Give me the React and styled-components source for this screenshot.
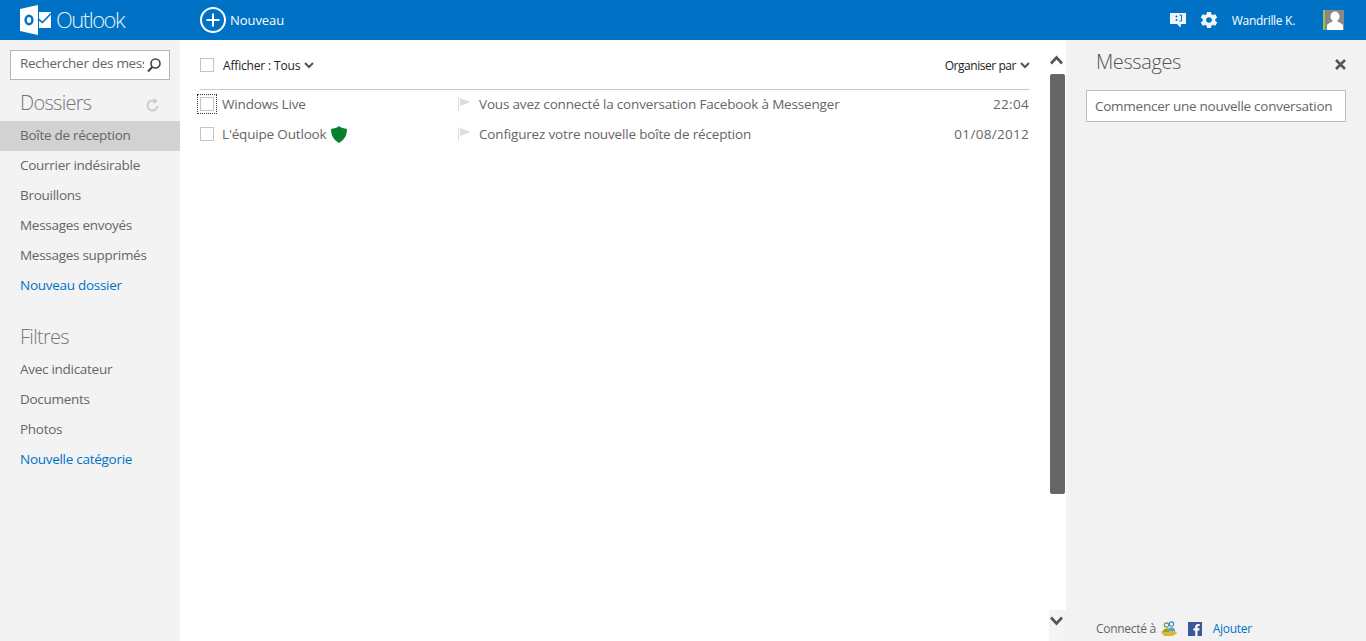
import styled, { createGlobalStyle } from 'styled-components';
import { IoMdSettings } from 'react-icons/io';

const Global = createGlobalStyle`
  html, body { margin: 0; padding: 0; height: 100%; overflow: hidden; }
  body { font-family: "Open Sans", "Noto Sans", sans-serif; color: #666; background: #fff; }
  * { box-sizing: border-box; }
`;

const Page = styled.div`
  width: 1366px;
  height: 641px;
  display: flex;
  flex-direction: column;
  overflow: hidden;
`;

const Header = styled.header`
  height: 40px;
  flex: none;
  background: #0072c6;
  color: #fff;
  display: flex;
  align-items: center;
  padding-left: 20px;
`;

const Brand = styled.div`
  width: 180px;
  display: flex;
  align-items: center;
  gap: 5px;
`;

const BrandName = styled.span`
  font-size: 22px;
  font-weight: 300;
  letter-spacing: -1.5px;
  padding-bottom: 3px;
  color: #e4f1fa;
`;

const NewButton = styled.div`
  display: flex;
  align-items: center;
  gap: 4px;
  font-size: 13px;
  letter-spacing: -0.05px;
`;

const HeaderRight = styled.div`
  margin-left: auto;
  display: flex;
  align-items: center;
  padding-right: 22px;
`;

const Gear = styled(IoMdSettings)`
  margin-left: 13px;
  color: #eef5fb;
`;

const UserName = styled.span`
  font-size: 12px;
  letter-spacing: -0.3px;
  margin: 0 28px 0 13px;
`;

const Body = styled.div`
  flex: 1;
  display: flex;
  min-height: 0;
`;

const Sidebar = styled.aside`
  width: 180px;
  flex: none;
  background: #f3f3f3;
  padding-top: 10px;
`;

const SearchBox = styled.div`
  margin: 0 10px;
  height: 30px;
  border: 1px solid #b5b5b5;
  background: #fff;
  display: flex;
  align-items: center;
  padding: 0 7px 0 9px;
  font-size: 13.5px;
  letter-spacing: -0.3px;
  color: #666;
`;

const SearchText = styled.span`
  width: 124px;
  overflow: hidden;
  white-space: nowrap;
  margin-right: auto;
  padding-bottom: 4px;
`;

const SectionTitle = styled.div`
  display: flex;
  align-items: center;
  justify-content: space-between;
  height: 32px;
  padding: 0 20px 6px;
  margin-top: ${p => p.$top}px;
  font-size: 20px;
  font-weight: 300;
  letter-spacing: -0.7px;
  color: #777;
`;

const NavItem = styled.div`
  height: 30px;
  line-height: 29px;
  padding-left: 20px;
  font-size: 13.5px;
  letter-spacing: -0.28px;
  color: ${p => (p.$link ? '#0072c6' : '#666')};
  background: ${p => (p.$active ? '#d2d2d2' : 'transparent')};
`;

const Main = styled.main`
  flex: 1;
  display: flex;
  background: #fff;
  min-width: 0;
`;

const ListArea = styled.div`
  flex: 1;
  padding: 0 20px;
  min-width: 0;
`;

const Toolbar = styled.div`
  height: 50px;
  display: flex;
  align-items: center;
  border-bottom: 1px solid #c8c8c8;
  font-size: 12px;
  letter-spacing: -0.17px;
  color: #222;
`;

const Check = styled.span`
  width: 14px;
  height: 14px;
  flex: none;
  border: 1px solid #c4c4c4;
  background: #fff;
  display: block;
`;

const FocusRing = styled.span`
  width: 20px;
  height: 20px;
  flex: none;
  margin-left: -3px;
  margin-right: -3px;
  border: 1px dotted #333;
  display: flex;
  align-items: center;
  justify-content: center;
`;

const ToolLabel = styled.span`
  margin-left: 9px;
  padding-top: 2px;
  display: flex;
  align-items: center;
  gap: 4px;
`;

const SortLabel = styled(ToolLabel)`
  margin-left: auto;
  letter-spacing: -0.45px;
`;

const MailRow = styled.div`
  height: 30px;
  padding-bottom: 2px;
  display: flex;
  align-items: center;
  font-size: 13.5px;
  letter-spacing: -0.17px;
  color: #666;
`;

const Sender = styled.span`
  width: 236px;
  margin-left: 8px;
  display: flex;
  align-items: center;
  gap: 4px;
  flex: none;
`;

const Subject = styled.span`
  flex: 1;
  margin-left: 8px;
`;

const When = styled.span`
  letter-spacing: 0.3px;
  margin-right: 1px;
`;

const Scrollbar = styled.div`
  width: 17px;
  flex: none;
  display: flex;
  flex-direction: column;
  align-items: center;
  margin-left: -1px;
`;

const ArrowUp = styled.div`
  height: 34px;
  padding-top: 15px;
  padding-right: 2px;
  color: #555;
  display: flex;
  justify-content: center;
`;

const Thumb = styled.div`
  width: 15px;
  height: 420px;
  margin-right: 1px;
  background: #666;
  border-radius: 2px;
`;

const ArrowDown = styled.div`
  margin-top: auto;
  width: 100%;
  height: 31px;
  background: #f4f4f4;
  color: #555;
  display: flex;
  justify-content: center;
  padding-top: 6px;
  padding-right: 2px;
`;

const MessagesPane = styled.aside`
  width: 300px;
  flex: none;
  background: #f2f2f2;
  padding: 0 20px;
  display: flex;
  flex-direction: column;
`;

const PaneHeader = styled.div`
  height: 50px;
  display: flex;
  align-items: center;
  justify-content: space-between;
  padding: 0 0 8px 10px;
  font-size: 20px;
  font-weight: 300;
  letter-spacing: -0.4px;
  color: #555;
`;

const CloseIcon = styled.svg`
  width: 11px;
  height: 11px;
  margin-top: 7px;
`;

const NewChat = styled.div`
  height: 32px;
  border: 1px solid #bdbdbd;
  background: #fff;
  display: flex;
  align-items: center;
  padding-left: 8px;
  font-size: 13.5px;
  letter-spacing: -0.26px;
  white-space: nowrap;
  color: #666;
`;

const PaneFooter = styled.div`
  margin-top: auto;
  height: 24px;
  padding: 0 0 1px 10px;
  display: flex;
  align-items: center;
  font-size: 12px;
  letter-spacing: -0.3px;
  color: #666;
`;

const AddLink = styled.span`
  color: #0072c6;
  margin-left: 11px;
`;

const Avatar = styled.div`
  width: 21px;
  height: 20px;
  background: #888;
  border-left: 2px solid #9ec23c;
  display: flex;
  justify-content: center;
`;

const RefreshSvg = styled.svg`
  margin-top: 5px;
`;

const PeopleSvg = styled.svg`
  margin-left: 5px;
`;

const FacebookSvg = styled.svg`
  margin-left: 11px;
`;

const LogoIcon = () => (
  <svg width="31" height="30" viewBox="0 0 31 30">
    <path d="M0 4 L18 0 V30 L0 26 Z" fill="#fff" />
    <path d="M19 7 H31 V23 H19 Z" fill="#fff" />
    <path d="M18 14 L22.500 17.500 L31 8.500" fill="none" stroke="#0072c6" strokeWidth="1.600" />
    <ellipse cx="9" cy="15" rx="3.400" ry="4.200" fill="none" stroke="#0072c6" strokeWidth="2.400" />
  </svg>
);

const PlusIcon = () => (
  <svg width="26" height="26" viewBox="0 0 26 26">
    <circle cx="13" cy="13" r="12" fill="none" stroke="#fff" strokeWidth="2" />
    <path d="M13 6.500 V19.500 M6.500 13 H19.500" stroke="#fff" strokeWidth="2" />
  </svg>
);

const ChatIcon = () => (
  <svg width="16" height="16" viewBox="0 0 16 16">
    <path d="M0 1 H16 V12 H11 L10.500 15.500 L7 12 H0 Z" fill="#eef5fb" />
    <circle cx="6.500" cy="4.500" r="1" fill="#0072c6" />
    <circle cx="6.500" cy="8" r="1" fill="#0072c6" />
    <path d="M9.500 3 L11.500 3 V9 H9.500" fill="none" stroke="#0072c6" strokeWidth="1" />
  </svg>
);

const MagnifierIcon = () => (
  <svg width="16" height="16" viewBox="0 0 16 16">
    <circle cx="9.500" cy="6.500" r="4.500" fill="none" stroke="#444" strokeWidth="1.600" />
    <path d="M6.200 10 L2 14.500" stroke="#444" strokeWidth="2" />
  </svg>
);

const RefreshIcon = () => (
  <RefreshSvg width="14" height="14" viewBox="0 0 14 14">
    <path d="M11.500 8 A5 5 0 1 1 8 2.700" fill="none" stroke="#ccc" strokeWidth="2" />
    <path d="M7.500 0 L12 3 L7.500 6 Z" fill="#ccc" />
  </RefreshSvg>
);

const FlagIcon = () => (
  <svg width="13" height="14" viewBox="0 0 13 14">
    <path d="M0.500 0 V14" stroke="#ddd" strokeWidth="1" />
    <path d="M2 1 L12.500 5 L2 9 Z" fill="#ddd" />
  </svg>
);

const ShieldIcon = () => (
  <svg width="16" height="17" viewBox="0 0 16 17">
    <path d="M8 0 C10 2 13 2 16 3 C16 10 13 14 8 17 C3 14 0 10 0 3 C3 2 6 2 8 0 Z" fill="#0a7f2e" />
  </svg>
);

const PeopleIcon = () => (
  <PeopleSvg width="16" height="15" viewBox="0 0 16 15">
    <path d="M0 11 L5 7 H11 L16 12 L12 15 H3 Z" fill="#d9b93c" />
    <path d="M2 11 C2 7 8 7 8 11 Z" fill="#7ea83a" />
    <circle cx="5.500" cy="4" r="2.200" fill="none" stroke="#5b9e4a" strokeWidth="1.200" />
    <circle cx="10.500" cy="3" r="2.200" fill="none" stroke="#3f87c4" strokeWidth="1.200" />
    <path d="M7 10 C7 5 14 5 14 10 Z" fill="#5aa0d8" />
  </PeopleSvg>
);

const FacebookIcon = () => (
  <FacebookSvg width="14" height="14" viewBox="0 0 14 14">
    <rect width="14" height="14" fill="#3b5998" />
    <path d="M9.500 14 V8.500 H11.300 L11.600 6.300 H9.500 V5 C9.500 4.300 9.800 3.900 10.600 3.900 H11.700 V2 C11.300 1.900 10.700 1.900 10 1.900 C8.300 1.900 7.200 2.900 7.200 4.800 V6.300 H5.400 V8.500 H7.200 V14 Z" fill="#fff" />
  </FacebookSvg>
);

const UserIcon = () => (
  <svg width="18" height="20" viewBox="0 0 18 20">
    <ellipse cx="9" cy="6.500" rx="4.500" ry="5" fill="#fff" />
    <path d="M1 20 V16 C1 13 5 13 6.500 11 H11.500 C13 13 17 13 17 16 V20 Z" fill="#fff" />
  </svg>
);

// small heavy chevron used in the toolbar
const SmallChevron = () => (
  <svg width="10" height="7" viewBox="0 0 10 7">
    <path d="M1 1 L5 5 L9 1" fill="none" stroke="#555" strokeWidth="2" />
  </svg>
);

// scroll arrow, direction comes from the points
const ScrollChevron = ({ up }) => (
  <svg width="13" height="10" viewBox="0 0 13 10">
    <path d={up ? 'M1 8.500 L6.500 2.500 L12 8.500' : 'M1 1.500 L6.500 7.500 L12 1.500'} fill="none" stroke="#555" strokeWidth="2.600" />
  </svg>
);

const folders = ['Courrier indésirable', 'Brouillons', 'Messages envoyés', 'Messages supprimés'];
const filters = ['Avec indicateur', 'Documents', 'Photos'];

export default function App() {
  return (
    <Page>
      <Global />
      <Header>
        <Brand>
          <LogoIcon />
          <BrandName>Outlook</BrandName>
        </Brand>
        <NewButton>
          <PlusIcon />
          Nouveau
        </NewButton>
        <HeaderRight>
          <ChatIcon />
          <Gear size={20} />
          <UserName>Wandrille K.</UserName>
          <Avatar>
            <UserIcon />
          </Avatar>
        </HeaderRight>
      </Header>
      <Body>
        <Sidebar>
          <SearchBox>
            <SearchText>Rechercher des messages</SearchText>
            <MagnifierIcon />
          </SearchBox>
          <SectionTitle $top={9}>
            Dossiers
            <RefreshIcon />
          </SectionTitle>
          <NavItem $active>Boîte de réception</NavItem>
          {folders.map(name => (
            <NavItem key={name}>{name}</NavItem>
          ))}
          <NavItem $link>Nouveau dossier</NavItem>
          <SectionTitle $top={22}>Filtres</SectionTitle>
          {filters.map(name => (
            <NavItem key={name}>{name}</NavItem>
          ))}
          <NavItem $link>Nouvelle catégorie</NavItem>
        </Sidebar>
        <Main>
          <ListArea>
            <Toolbar>
              <Check />
              <ToolLabel>
                Afficher : Tous <SmallChevron />
              </ToolLabel>
              <SortLabel>
                Organiser par <SmallChevron />
              </SortLabel>
            </Toolbar>
            <MailRow>
              <FocusRing>
                <Check />
              </FocusRing>
              <Sender>Windows Live</Sender>
              <FlagIcon />
              <Subject>Vous avez connecté la conversation Facebook à Messenger</Subject>
              <When>22:04</When>
            </MailRow>
            <MailRow>
              <Check />
              <Sender>
                L'équipe Outlook <ShieldIcon />
              </Sender>
              <FlagIcon />
              <Subject>Configurez votre nouvelle boîte de réception</Subject>
              <When>01/08/2012</When>
            </MailRow>
          </ListArea>
          <Scrollbar>
            <ArrowUp>
              <ScrollChevron up />
            </ArrowUp>
            <Thumb />
            <ArrowDown>
              <ScrollChevron />
            </ArrowDown>
          </Scrollbar>
        </Main>
        <MessagesPane>
          <PaneHeader>
            Messages
            <CloseIcon viewBox="0 0 11 11">
              <path d="M1 1 L10 10 M10 1 L1 10" stroke="#555" strokeWidth="2.600" />
            </CloseIcon>
          </PaneHeader>
          <NewChat>Commencer une nouvelle conversation</NewChat>
          <PaneFooter>
            Connecté à
            <PeopleIcon />
            <FacebookIcon />
            <AddLink>Ajouter</AddLink>
          </PaneFooter>
        </MessagesPane>
      </Body>
    </Page>
  );
}
